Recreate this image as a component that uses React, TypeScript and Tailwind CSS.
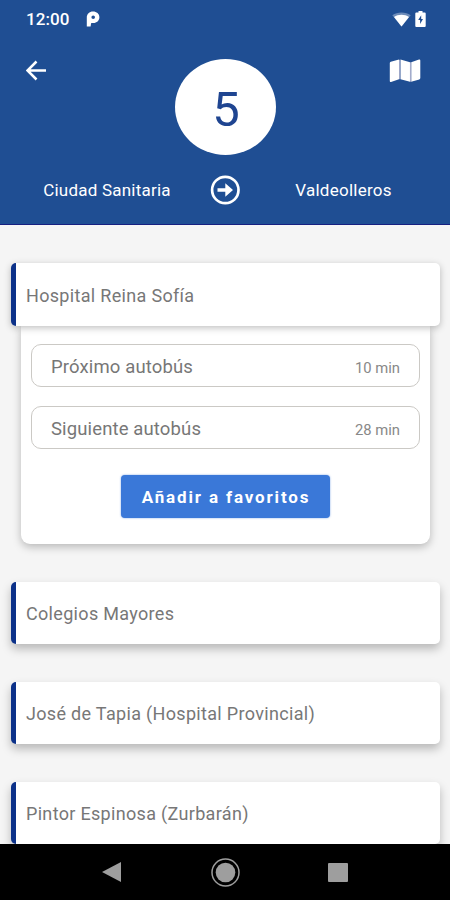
import { useState } from "react";

interface Arrival {
  label: string;
  wait: string;
}

interface Stop {
  id: string;
  name: string;
  arrivals: Arrival[];
}

const arrivals: Arrival[] = [
  { label: "Próximo autobús", wait: "10 min" },
  { label: "Siguiente autobús", wait: "28 min" },
];

const stops: Stop[] = [
  { id: "reina-sofia", name: "Hospital Reina Sofía", arrivals },
  { id: "colegios", name: "Colegios Mayores", arrivals },
  { id: "tapia", name: "José de Tapia (Hospital Provincial)", arrivals },
  { id: "espinosa", name: "Pintor Espinosa (Zurbarán)", arrivals },
];

function StatusBar() {
  return (
    <div className="flex h-[38px] items-center pl-[26px] pr-[24px]">
      <span className="text-[17px] font-medium leading-none tracking-[0.1px]">12:00</span>
      <svg viewBox="0 0 14 16" className="ml-[16px] h-4 w-[14px]" aria-hidden="true">
        <path
          fill="currentColor"
          fillRule="evenodd"
          d="M.8 6.600C.8 3 3.400.5 7 .5s6.400 2.300 6.400 5.700-2.700 5.800-6 5.800h-1.800Q5 12 5 12.800L4.600 15.500H.8zM7.200 4.500a1.800 1.800 0 1 0 0 3.600 1.800 1.800 0 0 0 0-3.600z"
        />
      </svg>
      <svg viewBox="0 0 19 15" className="ml-auto h-[15px] w-[19px]" aria-hidden="true">
        <path fill="currentColor" opacity="0.35" d="M.3 3.300C5.500-.5 13.500-.5 18.700 3.300L9.500 14.500z" />
        <path fill="currentColor" d="M2 5c4.200-3.100 10.800-3.100 15 0L9.500 14.500z" />
      </svg>
      <svg viewBox="0 0 11 16" className="ml-1 h-4 w-[11px]" aria-hidden="true">
        <path
          fill="currentColor"
          fillRule="evenodd"
          d="M3.500 0h4v1.500H9.700q1 0 1 1V15q0 1-1 1H1.300q-1 0-1-1V2.500q0-1 1-1h2.200zM6.200 4.200 3.200 9h1.900v4l2.900-5H6.200z"
        />
      </svg>
    </div>
  );
}

function LineHeader() {
  return (
    <header className="h-[225px] border-b border-[#161f80] bg-[#1f4e93] text-white">
      <StatusBar />
      <div className="grid grid-cols-[1fr_101px_1fr] items-start pl-[26px] pr-[25px] pt-[21px]">
        <button className="w-[22px]" aria-label="Volver">
          <svg viewBox="0 0 22 22" className="h-[22px] w-[22px]" aria-hidden="true">
            <path
              d="M20 11.500H2M10.500 2.500 1.500 11.500l9 9"
              fill="none"
              stroke="currentColor"
              strokeWidth="2.500"
            />
          </svg>
        </button>
        <div className="flex h-[96px] items-center justify-center rounded-[50%] bg-white text-[49px] leading-none text-[#1f4591]">
          <span className="pl-[1px] pt-[5px]">5</span>
        </div>
        <button className="mr-[4px] justify-self-end" aria-label="Mapa">
          <svg viewBox="0 0 32 24" className="h-6 w-8" aria-hidden="true">
            <path
              fill="currentColor"
              d="M.8 4q0-1 1-1.300L10 .5v19.800L2 23Q.8 23.400.8 22zM11.500.5 21 3.200v19.600l-9.500-2.500zM22.200 3.200 30 .6q1.300-.4 1.300 1V19q0 1-1 1.400l-8.100 2.400z"
            />
            <path
              d="M10.700.8v19.500M21.600 3.200v19.600"
              stroke="#a3abcb"
              strokeWidth="1.300"
              fill="none"
            />
          </svg>
        </button>
      </div>
      <div className="mt-[20px] flex items-center px-[10px]">
        <span className="w-[193px] pl-[1px] text-center text-[17px] leading-[30px] tracking-[0.220px]">
          Ciudad Sanitaria
        </span>
        <svg viewBox="0 0 30 30" className="mx-[7px] h-[30px] w-[30px]" aria-hidden="true">
          <circle cx="15.300" cy="15" r="13.200" fill="none" stroke="currentColor" strokeWidth="2.700" />
          <path d="M7.500 13.200h7.800V8.200l7.700 6.800-7.700 6.800v-5H7.500z" fill="currentColor" />
        </svg>
        <span className="w-[193px] text-center text-[17px] leading-[30px] tracking-[0.250px]">
          Valdeolleros
        </span>
      </div>
    </header>
  );
}

function StopDetail({ items }: { items: Arrival[] }) {
  return (
    <div className="mx-[10px] h-[218px] rounded-b-[9px] bg-white px-[10px] pt-[18px] shadow-[0_3px_8px_rgba(0,0,0,0.25)]">
      <div className="space-y-[19px]">
        {items.map((item) => (
          <div
            key={item.label}
            className="flex h-[43px] items-center justify-between rounded-[10px] border border-[#cbc9c5] px-[19px] text-[#777]"
          >
            <span className="pt-[5px] text-[18.500px] tracking-[0.130px]">{item.label}</span>
            <span className="pt-[6px] text-[14.800px] text-[#888]">{item.wait}</span>
          </div>
        ))}
      </div>
      <button className="mx-auto mt-[26px] block h-[43px] w-[209px] rounded-[4px] bg-[#3a78d8] pl-[1px] pt-[2px] text-[17px] font-bold tracking-[1.850px] text-white shadow-[0_0_2px_rgba(58,120,216,0.7)]">
        Añadir a favoritos
      </button>
    </div>
  );
}

export default function App() {
  const [openId, setOpenId] = useState<string | null>("reina-sofia");

  return (
    <div className="flex h-[900px] w-[450px] flex-col overflow-hidden bg-[#f5f5f5] font-['Roboto',sans-serif]">
      <LineHeader />
      <main className="min-h-0 flex-1 space-y-[38px] overflow-hidden pl-[11px] pr-[10px] pt-[38px]">
        {stops.map((stop) => (
          <div key={stop.id}>
            <button
              onClick={() => setOpenId(openId === stop.id ? null : stop.id)}
              className={`relative flex w-full items-center rounded-[5px] border-l-[5px] border-[#0c3189] bg-white pl-[10px] text-left text-[18px] tracking-[0.320px] text-[#777] ${
                openId === stop.id
                  ? "h-[63px] pt-[1px] shadow-[0_2px_7px_rgba(0,0,0,0.25)]"
                  : "h-[62px] shadow-[0_5px_10px_rgba(0,0,0,0.25)]"
              }`}
            >
              <span>{stop.name}</span>
            </button>
            {openId === stop.id && <StopDetail items={stop.arrivals} />}
          </div>
        ))}
      </main>
      <nav className="grid h-[56px] shrink-0 grid-cols-[1fr_29px_1fr] items-center bg-black text-[#9e9e9e]">
        <svg viewBox="0 0 20 20" className="ml-[102px] h-5 w-5" aria-hidden="true">
          <path d="M0 10 19 0v20z" fill="currentColor" />
        </svg>
        <svg viewBox="0 0 29 29" className="h-[29px] w-[29px]" aria-hidden="true">
          <circle cx="14.500" cy="14.500" r="13.500" fill="none" stroke="currentColor" strokeWidth="1.500" />
          <circle cx="14.500" cy="14.500" r="9.800" fill="currentColor" />
        </svg>
        <span className="ml-[88px] h-[19px] w-5 rounded-[1px] bg-[#9e9e9e]" />
      </nav>
    </div>
  );
}
